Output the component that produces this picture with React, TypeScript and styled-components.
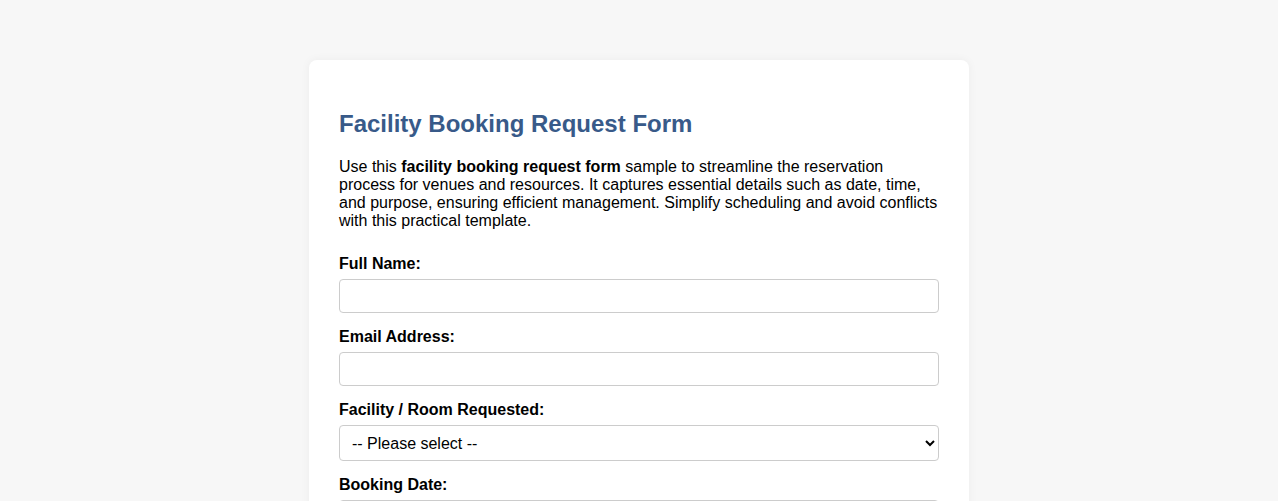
import styled, { createGlobalStyle } from 'styled-components';

const GlobalStyle = createGlobalStyle`
  html, body {
    margin: 0;
    padding: 0;
    background: #f7f7f7;
    font-family: "Liberation Sans", Arial, sans-serif;
    color: #000;
  }
`;

const facilities = [
  'Conference Room A',
  'Conference Room B',
  'Auditorium',
  'Gymnasium',
  'Training Lab',
];

export default function App() {
  return (
    <>
      <GlobalStyle />
      <Page>
        <Card>
          <Title>Facility Booking Request Form</Title>
          <Intro>
            Use this <strong>facility booking request form</strong> sample to streamline the reservation
            process for venues and resources. It captures essential details such as date, time,
            and purpose, ensuring efficient management. Simplify scheduling and avoid conflicts
            with this practical template.
          </Intro>

          <form onSubmit={(e) => e.preventDefault()}>
            <Label htmlFor="fullName">Full Name:</Label>
            <Input id="fullName" type="text" />

            <Label htmlFor="email">Email Address:</Label>
            <Input id="email" type="email" />

            <Label htmlFor="facility">Facility / Room Requested:</Label>
            <Select id="facility" defaultValue="">
              <option value="">-- Please select --</option>
              {facilities.map((f) => (
                <option key={f} value={f}>{f}</option>
              ))}
            </Select>

            <Label htmlFor="date">Booking Date:</Label>
            <Input id="date" type="date" />
          </form>
        </Card>
      </Page>
    </>
  );
}

const Page = styled.main`
  display: flex;
  justify-content: center;
  padding: 60px 20px 40px;
`;

const Card = styled.section`
  width: 660px;
  box-sizing: border-box;
  padding: 30px;
  background: #fff;
  border-radius: 8px;
  box-shadow: 0 0 10px rgba(0, 0, 0, 0.05);
`;

const Title = styled.h2`
  font-size: 24px;
  font-weight: bold;
  color: #385a89;
  margin: 20px 0;
`;

const Intro = styled.p`
  font-size: 16px;
  line-height: 18px;
  margin: 0 0 25px;
`;

const Label = styled.label`
  display: block;
  font-size: 16px;
  line-height: 18px;
  font-weight: bold;
  margin: 15px 0 6px;
`;

const Input = styled.input`
  display: block;
  width: 100%;
  height: 34px;
  box-sizing: border-box;
  padding: 8px;
  font-family: inherit;
  font-size: 14px;
  border: 1px solid #ccc;
  border-radius: 4px;
  background: #fff;
`;

const Select = styled.select`
  display: block;
  width: 100%;
  height: 36px;
  box-sizing: border-box;
  padding: 0 8px;
  font-family: inherit;
  font-size: 16px;
  color: #000;
  border: 1px solid #ccc;
  border-radius: 4px;
  background: #fff;
`;
